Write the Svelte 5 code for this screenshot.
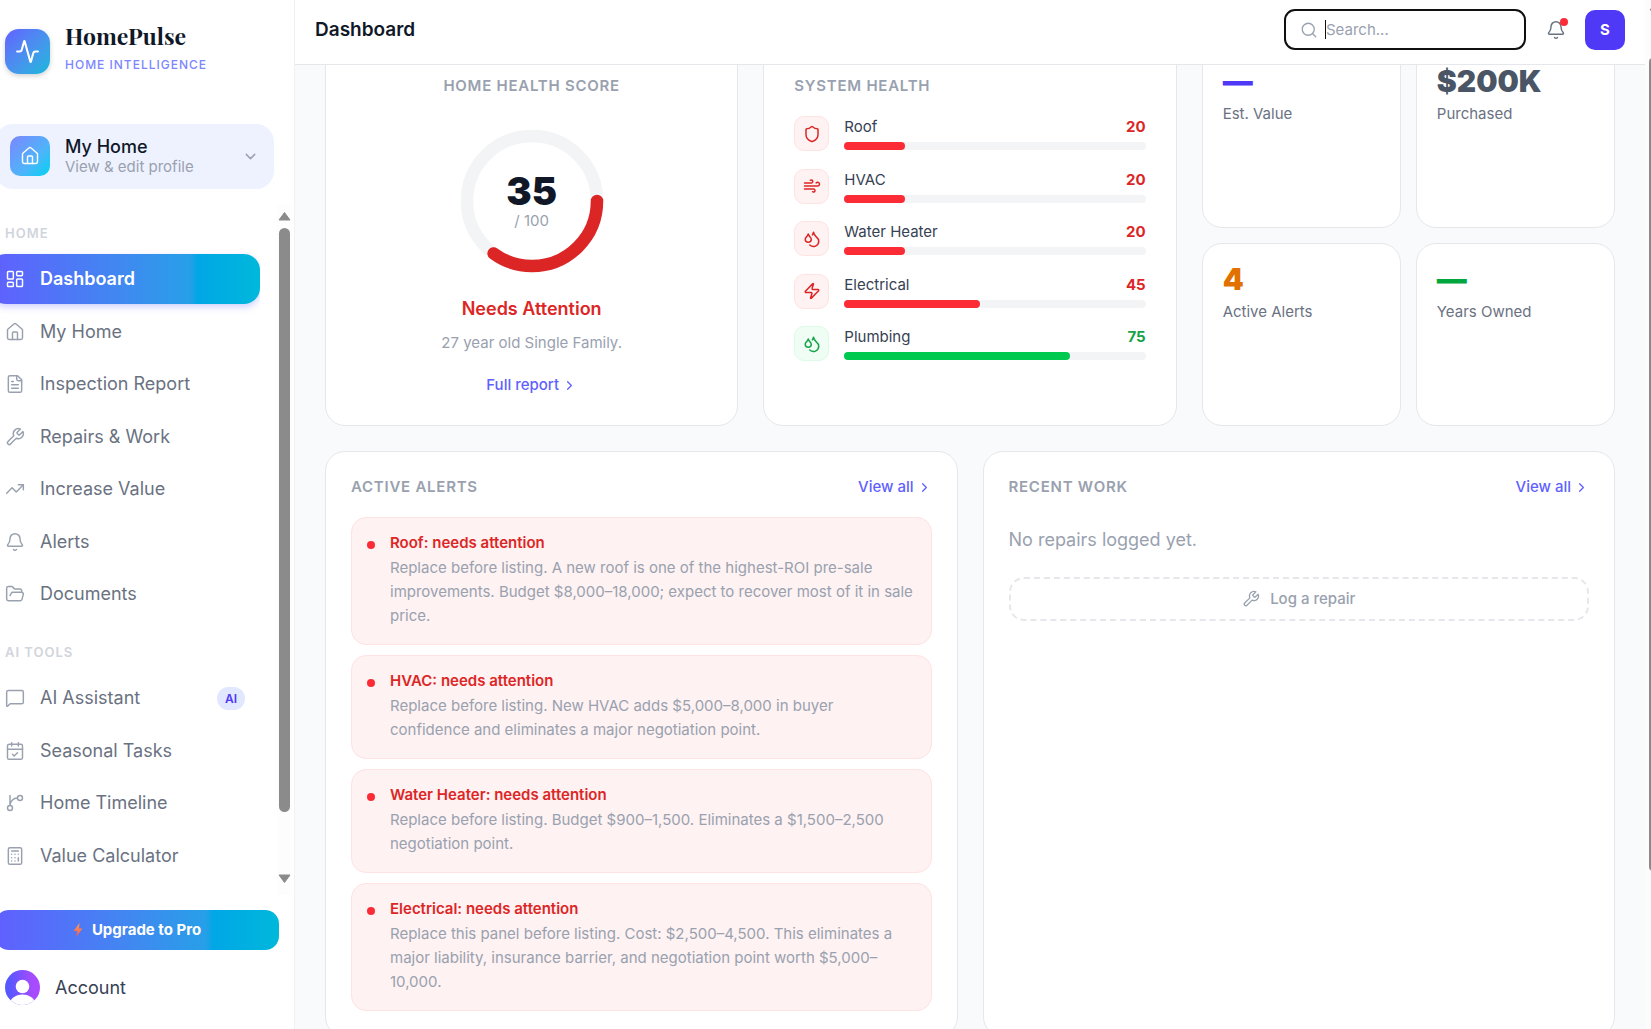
<script lang="ts">
	type Tone = 'bad' | 'good';

	const icons: Record<string, string[]> = {
		pulse: [
			'M22 12h-2.48a2 2 0 0 0-1.93 1.46l-2.35 8.36a.25.25 0 0 1-.48 0L9.24 2.18a.25.25 0 0 0-.48 0l-2.35 8.36A2 2 0 0 1 4.49 12H2'
		],
		dashboard: [
			'M4 3h5a1 1 0 0 1 1 1v7a1 1 0 0 1-1 1H4a1 1 0 0 1-1-1V4a1 1 0 0 1 1-1z',
			'M15 3h5a1 1 0 0 1 1 1v3a1 1 0 0 1-1 1h-5a1 1 0 0 1-1-1V4a1 1 0 0 1 1-1z',
			'M15 12h5a1 1 0 0 1 1 1v7a1 1 0 0 1-1 1h-5a1 1 0 0 1-1-1v-7a1 1 0 0 1 1-1z',
			'M4 16h5a1 1 0 0 1 1 1v3a1 1 0 0 1-1 1H4a1 1 0 0 1-1-1v-3a1 1 0 0 1 1-1z'
		],
		home: [
			'M15 21v-8a1 1 0 0 0-1-1h-4a1 1 0 0 0-1 1v8',
			'M3 10a2 2 0 0 1 .709-1.528l7-5.999a2 2 0 0 1 2.582 0l7 5.999A2 2 0 0 1 21 10v9a2 2 0 0 1-2 2H5a2 2 0 0 1-2-2z'
		],
		file: [
			'M15 2H6a2 2 0 0 0-2 2v16a2 2 0 0 0 2 2h12a2 2 0 0 0 2-2V7Z',
			'M14 2v4a2 2 0 0 0 2 2h4',
			'M10 9H8',
			'M16 13H8',
			'M16 17H8'
		],
		wrench: [
			'M14.7 6.3a1 1 0 0 0 0 1.4l1.6 1.6a1 1 0 0 0 1.4 0l3.77-3.77a6 6 0 0 1-7.94 7.94l-6.91 6.91a2.12 2.12 0 0 1-3-3l6.91-6.91a6 6 0 0 1 7.94-7.94l-3.76 3.76z'
		],
		trend: ['M22 7l-8.5 8.5-5-5L2 17', 'M16 7h6v6'],
		bell: [
			'M10.268 21a2 2 0 0 0 3.464 0',
			'M3.262 15.326A1 1 0 0 0 4 17h16a1 1 0 0 0 .74-1.673C19.41 13.956 18 12.499 18 8A6 6 0 0 0 6 8c0 4.499-1.411 5.956-2.738 7.326'
		],
		folder: [
			'M6 14l1.5-2.9A2 2 0 0 1 9.24 10H20a2 2 0 0 1 1.94 2.5l-1.54 6a2 2 0 0 1-1.95 1.5H4a2 2 0 0 1-2-2V5a2 2 0 0 1 2-2h3.9a2 2 0 0 1 1.69.9l.81 1.2a2 2 0 0 0 1.67.9H18a2 2 0 0 1 2 2v2'
		],
		message: [
			'M22 17a2 2 0 0 1-2 2H6.828a2 2 0 0 0-1.414.586l-2.202 2.202A.71.71 0 0 1 2 21.286V5a2 2 0 0 1 2-2h16a2 2 0 0 1 2 2z'
		],
		calendar: [
			'M8 2v4',
			'M16 2v4',
			'M5 4h14a2 2 0 0 1 2 2v14a2 2 0 0 1-2 2H5a2 2 0 0 1-2-2V6a2 2 0 0 1 2-2z',
			'M3 10h18',
			'M9 16l2 2 4-4'
		],
		branch: [
			'M15 6a9 9 0 0 0-9 9V3',
			'M21 6a3 3 0 1 1-6 0 3 3 0 0 1 6 0z',
			'M9 18a3 3 0 1 1-6 0 3 3 0 0 1 6 0z'
		],
		calculator: [
			'M6 2h12a2 2 0 0 1 2 2v16a2 2 0 0 1-2 2H6a2 2 0 0 1-2-2V4a2 2 0 0 1 2-2z',
			'M8 6h8',
			'M16 14v4',
			'M16 10h.01',
			'M12 10h.01',
			'M8 10h.01',
			'M12 14h.01',
			'M8 14h.01',
			'M12 18h.01',
			'M8 18h.01'
		],
		shield: [
			'M20 13c0 5-3.5 7.5-7.66 8.95a1 1 0 0 1-.67-.01C7.5 20.5 4 18 4 13V6a1 1 0 0 1 1-1c2 0 4.5-1.2 6.24-2.72a1.17 1.17 0 0 1 1.52 0C14.51 3.81 17 5 19 5a1 1 0 0 1 1 1z'
		],
		wind: [
			'M12.8 19.6A2 2 0 1 0 14 16H2',
			'M17.5 8a2.5 2.5 0 1 1 2 4H2',
			'M9.8 4.4A2 2 0 1 1 11 8H2'
		],
		droplets: [
			'M7 16.3c2.2 0 4-1.83 4-4.05 0-1.16-.57-2.26-1.71-3.19S7.29 6.75 7 5.3c-.29 1.45-1.14 2.84-2.29 3.76S3 11.1 3 12.25c0 2.22 1.8 4.05 4 4.05z',
			'M12.56 6.6A10.97 10.97 0 0 0 14 3.02c.5 2.5 2 4.9 4 6.5s3 3.5 3 5.5a6.98 6.98 0 0 1-11.91 4.97'
		],
		zap: [
			'M4 14a1 1 0 0 1-.78-1.63l9.9-10.2a.5.5 0 0 1 .86.46l-1.92 6.02A1 1 0 0 0 13 10h7a1 1 0 0 1 .78 1.63l-9.9 10.2a.5.5 0 0 1-.86-.46l1.92-6.02A1 1 0 0 0 11 14z'
		],
		search: ['M21 21l-4.34-4.34', 'M19 11a8 8 0 1 1-16 0 8 8 0 0 1 16 0z'],
		right: ['M9 18l6-6-6-6'],
		down: ['M6 9l6 6 6-6']
	};

	const groups = [
		{
			title: 'Home',
			items: [
				{ icon: 'dashboard', label: 'Dashboard' },
				{ icon: 'home', label: 'My Home' },
				{ icon: 'file', label: 'Inspection Report' },
				{ icon: 'wrench', label: 'Repairs & Work' },
				{ icon: 'trend', label: 'Increase Value' },
				{ icon: 'bell', label: 'Alerts' },
				{ icon: 'folder', label: 'Documents' }
			]
		},
		{
			title: 'AI Tools',
			items: [
				{ icon: 'message', label: 'AI Assistant', badge: 'AI' },
				{ icon: 'calendar', label: 'Seasonal Tasks' },
				{ icon: 'branch', label: 'Home Timeline' },
				{ icon: 'calculator', label: 'Value Calculator' }
			]
		}
	] as { title: string; items: { icon: string; label: string; badge?: string }[] }[];

	const systems: { icon: string; name: string; score: number; tone: Tone }[] = [
		{ icon: 'shield', name: 'Roof', score: 20, tone: 'bad' },
		{ icon: 'wind', name: 'HVAC', score: 20, tone: 'bad' },
		{ icon: 'droplets', name: 'Water Heater', score: 20, tone: 'bad' },
		{ icon: 'zap', name: 'Electrical', score: 45, tone: 'bad' },
		{ icon: 'droplets', name: 'Plumbing', score: 75, tone: 'good' }
	];

	const stats = [
		{ value: '—', label: 'Est. Value', color: 'indigo' },
		{ value: '$200K', label: 'Purchased', color: 'slate' },
		{ value: '4', label: 'Active Alerts', color: 'orange' },
		{ value: '—', label: 'Years Owned', color: 'green' }
	];

	const alerts = [
		{
			title: 'Roof: needs attention',
			text: 'Replace before listing. A new roof is one of the highest-ROI pre-sale improvements. Budget $8,000–18,000; expect to recover most of it in sale price.'
		},
		{
			title: 'HVAC: needs attention',
			text: 'Replace before listing. New HVAC adds $5,000–8,000 in buyer confidence and eliminates a major negotiation point.'
		},
		{
			title: 'Water Heater: needs attention',
			text: 'Replace before listing. Budget $900–1,500. Eliminates a $1,500–2,500 negotiation point.'
		},
		{
			title: 'Electrical: needs attention',
			text: 'Replace this panel before listing. Cost: $2,500–4,500. This eliminates a major liability, insurance barrier, and negotiation point worth $5,000–10,000.'
		}
	];

	const score = 35;
	const circumference = 2 * Math.PI * 52;

	let active = $state('Dashboard');
	let query = $state('');
</script>

{#snippet icon(name: string, size: number, stroke = 1.75)}
	<svg
		class="icon"
		width={size}
		height={size}
		viewBox="0 0 24 24"
		fill="none"
		stroke="currentColor"
		stroke-width={stroke}
		stroke-linecap="round"
		stroke-linejoin="round"
		aria-hidden="true"
	>
		{#each icons[name] as d}
			<path {d} />
		{/each}
	</svg>
{/snippet}

<div class="app">
	<aside class="sidebar">
		<div class="brand">
			<span class="logo">{@render icon('pulse', 25, 2)}</span>
			<div>
				<div class="brand-name">HomePulse</div>
				<div class="brand-tag">Home Intelligence</div>
			</div>
		</div>

		<button class="profile">
			<span class="profile-icon">{@render icon('home', 20)}</span>
			<span class="profile-text">
				<span class="profile-name">My Home</span>
				<span class="profile-sub">View &amp; edit profile</span>
			</span>
			{@render icon('down', 17, 2)}
		</button>

		<div class="nav-area">
			<nav>
				{#each groups as group}
					<h2 class="nav-title">{group.title}</h2>
					<ul class="nav-list" class:short={group.items.length < 5}>
						{#each group.items as item}
							<li>
								<a
									href="#{item.icon}"
									class="nav-item"
									class:active={active === item.label}
									onclick={() => (active = item.label)}
								>
									{@render icon(item.icon, 20, 1.75)}
									<span class="nav-label">{item.label}</span>
									{#if item.badge}
										<span class="badge">{item.badge}</span>
									{/if}
								</a>
							</li>
						{/each}
					</ul>
				{/each}
			</nav>
			<div class="scrollbar" aria-hidden="true">
				<svg width="13" height="10" viewBox="0 0 13 10">
					<path d="M6.500 1.500 L12 9 H1 Z" />
				</svg>
				<div class="track"><div class="thumb"></div></div>
				<svg width="13" height="10" viewBox="0 0 13 10">
					<path d="M6.500 8.500 L12 1 H1 Z" />
				</svg>
			</div>
		</div>

		<div class="foot">
			<button class="upgrade">
				<svg width="10" height="16" viewBox="0 0 10 16" aria-hidden="true">
					<defs>
						<linearGradient id="bolt" x1="0" y1="0" x2="0" y2="1">
							<stop offset="0" stop-color="#ffa04a" />
							<stop offset="1" stop-color="#f4525a" />
						</linearGradient>
					</defs>
					<path fill="url(#bolt)" d="M6.500 1 L0.500 9 H4.200 L3.200 15 L9.500 6.500 H6 Z" />
				</svg>
				Upgrade to Pro
			</button>
			<a class="account" href="#account">
				<svg width="35" height="35" viewBox="0 0 35 35" aria-hidden="true">
					<defs>
						<linearGradient id="avatar">
							<stop offset="0.100" stop-color="#5558ff" />
							<stop offset="0.800" stop-color="#a84bff" />
						</linearGradient>
						<clipPath id="avatar-clip"><circle cx="17.500" cy="17.500" r="17.500" /></clipPath>
					</defs>
					<g clip-path="url(#avatar-clip)">
						<rect width="35" height="35" fill="url(#avatar)" />
						<circle cx="17.500" cy="16.500" r="6.800" fill="#fff" />
						<ellipse cx="17.500" cy="35" rx="13" ry="10.500" fill="#fff" />
					</g>
				</svg>
				Account
			</a>
		</div>
	</aside>

	<div class="page">
		<header class="topbar">
			<h1>Dashboard</h1>
			<label class="search">
				{@render icon('search', 18)}
				<span class="caret"></span>
				<input type="text" placeholder="Search..." aria-label="Search" bind:value={query} />
			</label>
			<button class="bell" aria-label="Notifications">
				{@render icon('bell', 20)}
				<span class="dot"></span>
			</button>
			<button class="user">S</button>
		</header>

		<main>
			<div class="row top">
				<section class="card health">
					<h3>Home Health Score</h3>
					<div class="ring">
						<svg width="150" height="150" viewBox="0 0 120 120" aria-hidden="true">
							<circle cx="60" cy="60" r="52" fill="none" stroke="#f3f4f6" stroke-width="10" />
							<circle
								cx="60"
								cy="60"
								r="52"
								fill="none"
								stroke="#dc2626"
								stroke-width="10"
								stroke-linecap="round"
								stroke-dasharray="{(score / 100) * circumference} {circumference}"
							/>
						</svg>
						<div class="ring-text">
							<strong>{score}</strong>
							<span>/ 100</span>
						</div>
					</div>
					<p class="verdict">Needs Attention</p>
					<p class="about">27 year old Single Family.</p>
					<a class="more" href="#report">Full report {@render icon('right', 15, 2)}</a>
				</section>

				<section class="card systems">
					<h3>System Health</h3>
					<ul>
						{#each systems as system}
							<li class={system.tone}>
								<span class="system-icon">{@render icon(system.icon, 18, 2)}</span>
								<div class="system-body">
									<div class="system-line">
										<span>{system.name}</span>
										<b>{system.score}</b>
									</div>
									<div class="bar"><div class="fill" style:width="{system.score}%"></div></div>
								</div>
							</li>
						{/each}
					</ul>
				</section>

				<div class="stats">
					{#each stats as stat}
						<div class="card stat">
							<div class="stat-value {stat.color}">{stat.value}</div>
							<div class="stat-label">{stat.label}</div>
						</div>
					{/each}
				</div>
			</div>

			<div class="row bottom">
				<section class="card panel">
					<div class="panel-head">
						<h3>Active Alerts</h3>
						<a class="more" href="#alerts">View all {@render icon('right', 15, 2)}</a>
					</div>
					<ul class="alerts">
						{#each alerts as alert}
							<li>
								<span class="alert-dot"></span>
								<div>
									<h4>{alert.title}</h4>
									<p>{alert.text}</p>
								</div>
							</li>
						{/each}
					</ul>
				</section>

				<section class="card panel">
					<div class="panel-head">
						<h3>Recent Work</h3>
						<a class="more" href="#work">View all {@render icon('right', 15, 2)}</a>
					</div>
					<p class="empty">No repairs logged yet.</p>
					<button class="log">{@render icon('wrench', 18, 1.75)} Log a repair</button>
				</section>
			</div>
		</main>
	</div>

	<div class="page-scroll" aria-hidden="true">
		<svg width="12" height="12" viewBox="0 0 12 12"><path d="M6 4 L11 10 H1 Z" /></svg>
		<div class="page-thumb"></div>
	</div>
</div>

<style>
	:global(body) {
		margin: 0;
		font-family: Inter, 'Liberation Sans', sans-serif;
		font-size: 15px;
		line-height: 20px;
		color: #101828;
		background: #f9fafb;
	}
	.app,
	.app * {
		box-sizing: border-box;
	}
	.app {
		--brand-gradient: linear-gradient(
			to right,
			#615fff,
			#3f8af0 50%,
			#279fe8 74%,
			#00a7e6 77%,
			#00b8db
		);
		display: flex;
		height: 100vh;
		overflow: hidden;
	}
	h1,
	h2,
	h3,
	h4,
	p,
	ul {
		margin: 0;
		padding: 0;
		list-style: none;
	}
	button {
		border: 0;
		padding: 0;
		background: none;
		font: inherit;
		color: inherit;
		cursor: pointer;
	}
	a {
		color: inherit;
		text-decoration: none;
	}
	.icon {
		flex: none;
		display: block;
	}

	/* sidebar */
	.sidebar {
		flex: none;
		display: flex;
		flex-direction: column;
		width: 295px;
		overflow: hidden;
		background: #fff;
		border-right: 1px solid #f0f1f3;
	}
	.brand {
		display: flex;
		align-items: flex-end;
		gap: 15px;
		padding: 22px 5px 50px;
	}
	.logo {
		display: grid;
		place-items: center;
		width: 45px;
		height: 45px;
		border-radius: 14px;
		color: #fff;
		background: linear-gradient(135deg in oklab, #615fff, #00b8db);
		box-shadow: 0 2px 5px rgb(0 0 0 / 0.18);
	}
	.brand-name {
		font-family: 'Playfair Display', 'Liberation Serif', serif;
		font-size: 23px;
		font-weight: 700;
		line-height: 28px;
		margin-bottom: 6px;
	}
	.brand-tag {
		font-size: 12px;
		font-weight: 500;
		line-height: 18px;
		letter-spacing: 1px;
		text-transform: uppercase;
		color: #7c86ff;
	}
	.profile {
		display: flex;
		align-items: center;
		gap: 15px;
		margin: 0 20px 15px -5px;
		padding: 12px 15px 13px;
		border-radius: 18px;
		background: #eef2ff;
		text-align: left;
		color: #99a1af;
	}
	.profile-icon {
		display: grid;
		place-items: center;
		width: 40px;
		height: 40px;
		border-radius: 10px;
		color: #fff;
		background: linear-gradient(135deg, #7c86ff, #4fb4fa 60%, #00d3f2);
	}
	.profile-text {
		flex: 1;
		display: flex;
		flex-direction: column;
	}
	.profile-name {
		font-size: 18px;
		font-weight: 500;
		line-height: 22px;
		color: #101828;
	}
	.profile-sub {
		line-height: 18px;
	}
	.nav-area {
		flex: 1;
		display: flex;
		justify-content: space-between;
		min-height: 0;
	}
	nav {
		flex: 1;
		margin: 0 17px 0 -10px;
		overflow: hidden;
	}
	.nav-title {
		padding: 20px 15px 12px;
		font-size: 13px;
		font-weight: 600;
		line-height: 18px;
		letter-spacing: 1px;
		text-transform: uppercase;
		color: #d1d5dc;
	}
	.nav-list {
		display: flex;
		flex-direction: column;
		justify-content: space-between;
		min-height: 365px;
		margin-bottom: 4px;
	}
	.nav-list.short {
		min-height: 208px;
	}
	.nav-item {
		display: flex;
		align-items: center;
		gap: 15px;
		height: 50px;
		padding: 0 15px;
		border-radius: 16px;
		font-size: 18px;
		color: #6a7282;
	}
	.nav-item .icon {
		color: #99a1af;
	}
	.nav-item.active {
		font-weight: 600;
		color: #fff;
		background: var(--brand-gradient);
		box-shadow: 0 3px 7px rgb(97 95 255 / 0.3);
	}
	.nav-item.active .icon {
		color: #fff;
	}
	.nav-label {
		flex: 1;
	}
	.badge {
		padding: 2px 8px;
		border-radius: 12px;
		font-size: 12px;
		font-weight: 600;
		line-height: 19px;
		color: #4f39f6;
		background: #e0e7ff;
	}
	.scrollbar {
		flex: none;
		display: flex;
		flex-direction: column;
		align-items: center;
		width: 15px;
		margin-right: 2px;
		padding: 7px 0 11px;
		background: #fdfdfd;
	}
	.scrollbar svg,
	.page-scroll svg {
		flex: none;
		display: block;
		fill: #8b8b8b;
		stroke: #8b8b8b;
		stroke-linejoin: round;
	}
	.track {
		flex: 1;
		padding: 7px 0 4px;
	}
	.thumb {
		width: 11px;
		height: 91%;
		border-radius: 6px;
		background: #8b8b8b;
	}
	.foot {
		padding: 15px 15px 24px 5px;
	}
	.upgrade {
		display: flex;
		align-items: center;
		justify-content: center;
		gap: 9px;
		width: calc(100% + 10px);
		height: 40px;
		margin: 0 0 20px -10px;
		border-radius: 14px;
		font-weight: 700;
		color: #fff;
		background: var(--brand-gradient);
	}
	.account {
		display: flex;
		align-items: center;
		gap: 15px;
		font-size: 18px;
		color: #364153;
	}

	/* top bar */
	.page {
		flex: 1;
		min-width: 0;
	}
	.topbar {
		position: relative;
		z-index: 1;
		display: flex;
		align-items: center;
		gap: 10px;
		padding: 9px 20px 14px;
		background: #fff;
		border-bottom: 1px solid #e5e7eb;
	}
	h1 {
		flex: 1;
		font-size: 19px;
		font-weight: 600;
		line-height: 24px;
	}
	.search {
		display: flex;
		align-items: center;
		width: 242px;
		height: 41px;
		padding: 0 14px;
		border: 2px solid #101010;
		border-radius: 11px;
		color: #99a1af;
	}
	.caret {
		width: 1px;
		height: 19px;
		margin-left: 7px;
		background: #101010;
	}
	input {
		flex: 1;
		min-width: 0;
		padding: 0;
		border: 0;
		outline: 0;
		background: none;
		font: inherit;
		color: #101828;
	}
	input::placeholder {
		color: #99a1af;
	}
	.bell {
		position: relative;
		display: grid;
		place-items: center;
		width: 39px;
		height: 40px;
		color: #6a7282;
	}
	.dot {
		position: absolute;
		top: 8px;
		right: 7px;
		width: 8px;
		height: 8px;
		border-radius: 50%;
		background: #fb2c36;
	}
	.user {
		width: 40px;
		height: 40px;
		border-radius: 10px;
		font-weight: 700;
		color: #fff;
		background: #4f39f6;
	}

	/* content, slid up under the top bar */
	main {
		margin-top: -20px;
		padding: 0 30px 30px;
	}
	.row {
		display: grid;
		gap: 25px;
		margin-bottom: 25px;
	}
	.top {
		grid-template-columns: repeat(3, 1fr);
	}
	.bottom {
		grid-template-columns: repeat(2, 1fr);
	}
	.card {
		background: #fff;
		border: 1px solid #e5e7eb;
		border-radius: 20px;
	}
	h3 {
		font-size: 15px;
		font-weight: 600;
		letter-spacing: 0.05em;
		text-transform: uppercase;
		color: #99a1af;
	}
	.more {
		display: flex;
		align-items: center;
		gap: 3px;
		font-weight: 500;
		color: #615fff;
	}

	.health {
		display: flex;
		flex-direction: column;
		align-items: center;
		padding: 30px;
	}
	.ring {
		display: grid;
		place-items: center;
		margin: 30px 0 20px;
	}
	.ring > * {
		grid-area: 1 / 1;
		display: block;
	}
	.ring-text {
		text-align: center;
		color: #99a1af;
	}
	.ring-text strong {
		display: block;
		font-size: 38px;
		font-weight: 900;
		line-height: 40px;
		color: #101828;
	}
	.ring-text span {
		display: block;
	}
	.verdict {
		font-size: 18px;
		font-weight: 600;
		line-height: 26px;
		color: #dc2626;
	}
	.about {
		margin: 11px 0 22px;
		color: #99a1af;
	}

	.systems {
		padding: 30px;
	}
	.systems ul {
		display: flex;
		flex-direction: column;
		justify-content: space-between;
		min-height: 245px;
		margin-top: 20px;
	}
	.systems li {
		display: flex;
		gap: 15px;
	}
	.system-icon {
		display: grid;
		place-items: center;
		width: 35px;
		height: 35px;
		border: 1px solid #ffe2e2;
		border-radius: 10px;
		color: #dc2626;
		background: #fef2f2;
	}
	.system-body {
		flex: 1;
	}
	.system-line {
		display: flex;
		justify-content: space-between;
		margin-bottom: 4px;
		line-height: 22px;
		color: #364153;
	}
	.system-line b {
		color: #dc2626;
	}
	.bar {
		height: 8px;
		border-radius: 4px;
		background: #f3f4f6;
	}
	.fill {
		height: 100%;
		border-radius: 4px;
		background: #fb2c36;
	}
	.good .system-icon {
		border-color: #dcfce7;
		color: #16a34a;
		background: #f0fdf4;
	}
	.good b {
		color: #16a34a;
	}
	.good .fill {
		background: #00c950;
	}

	.stats {
		display: grid;
		grid-template-columns: 1fr 1fr;
		grid-auto-rows: 1fr;
		gap: 15px;
	}
	.stat {
		padding: 20px;
	}
	.stat-value {
		margin-bottom: 8px;
		font-size: 30px;
		font-weight: 900;
		line-height: 30px;
	}
	.stat-label {
		color: #6a7282;
	}
	.indigo {
		color: #4f39f6;
	}
	.slate {
		color: #4a5565;
	}
	.orange {
		color: #e17100;
	}
	.green {
		color: #00a63e;
	}

	.panel {
		padding: 25px;
	}
	.panel-head {
		display: flex;
		justify-content: space-between;
		margin-bottom: 20px;
	}
	.alerts {
		display: flex;
		flex-direction: column;
		gap: 10px;
	}
	.alerts li {
		display: flex;
		gap: 15px;
		padding: 14px 15px 16px;
		border: 1px solid #ffe2e2;
		border-radius: 15px;
		background: #fef2f2;
	}
	.alert-dot {
		flex: none;
		width: 8px;
		height: 8px;
		margin-top: 9px;
		border-radius: 50%;
		background: #fb2c36;
	}
	h4 {
		margin-bottom: 2px;
		font-size: 15px;
		font-weight: 600;
		line-height: 22px;
		color: #dc2626;
	}
	.alerts p {
		line-height: 24px;
		color: #99a1af;
	}
	.empty {
		padding: 10px 0 24px;
		font-size: 18px;
		line-height: 26px;
		color: #99a1af;
	}
	.log {
		display: flex;
		align-items: center;
		justify-content: center;
		gap: 10px;
		width: 100%;
		height: 44px;
		border: 2px dashed #e5e7eb;
		border-radius: 15px;
		font-weight: 500;
		color: #99a1af;
	}

	/* window scrollbar, running off the right edge */
	.page-scroll {
		flex: none;
		width: 6px;
		overflow: hidden;
		background: #fcfcfc;
		padding-left: 4px;
	}
	.page-thumb {
		width: 11px;
		height: 79%;
		margin-top: 46px;
		border-radius: 4px;
		background: #8b8b8b;
	}
</style>
